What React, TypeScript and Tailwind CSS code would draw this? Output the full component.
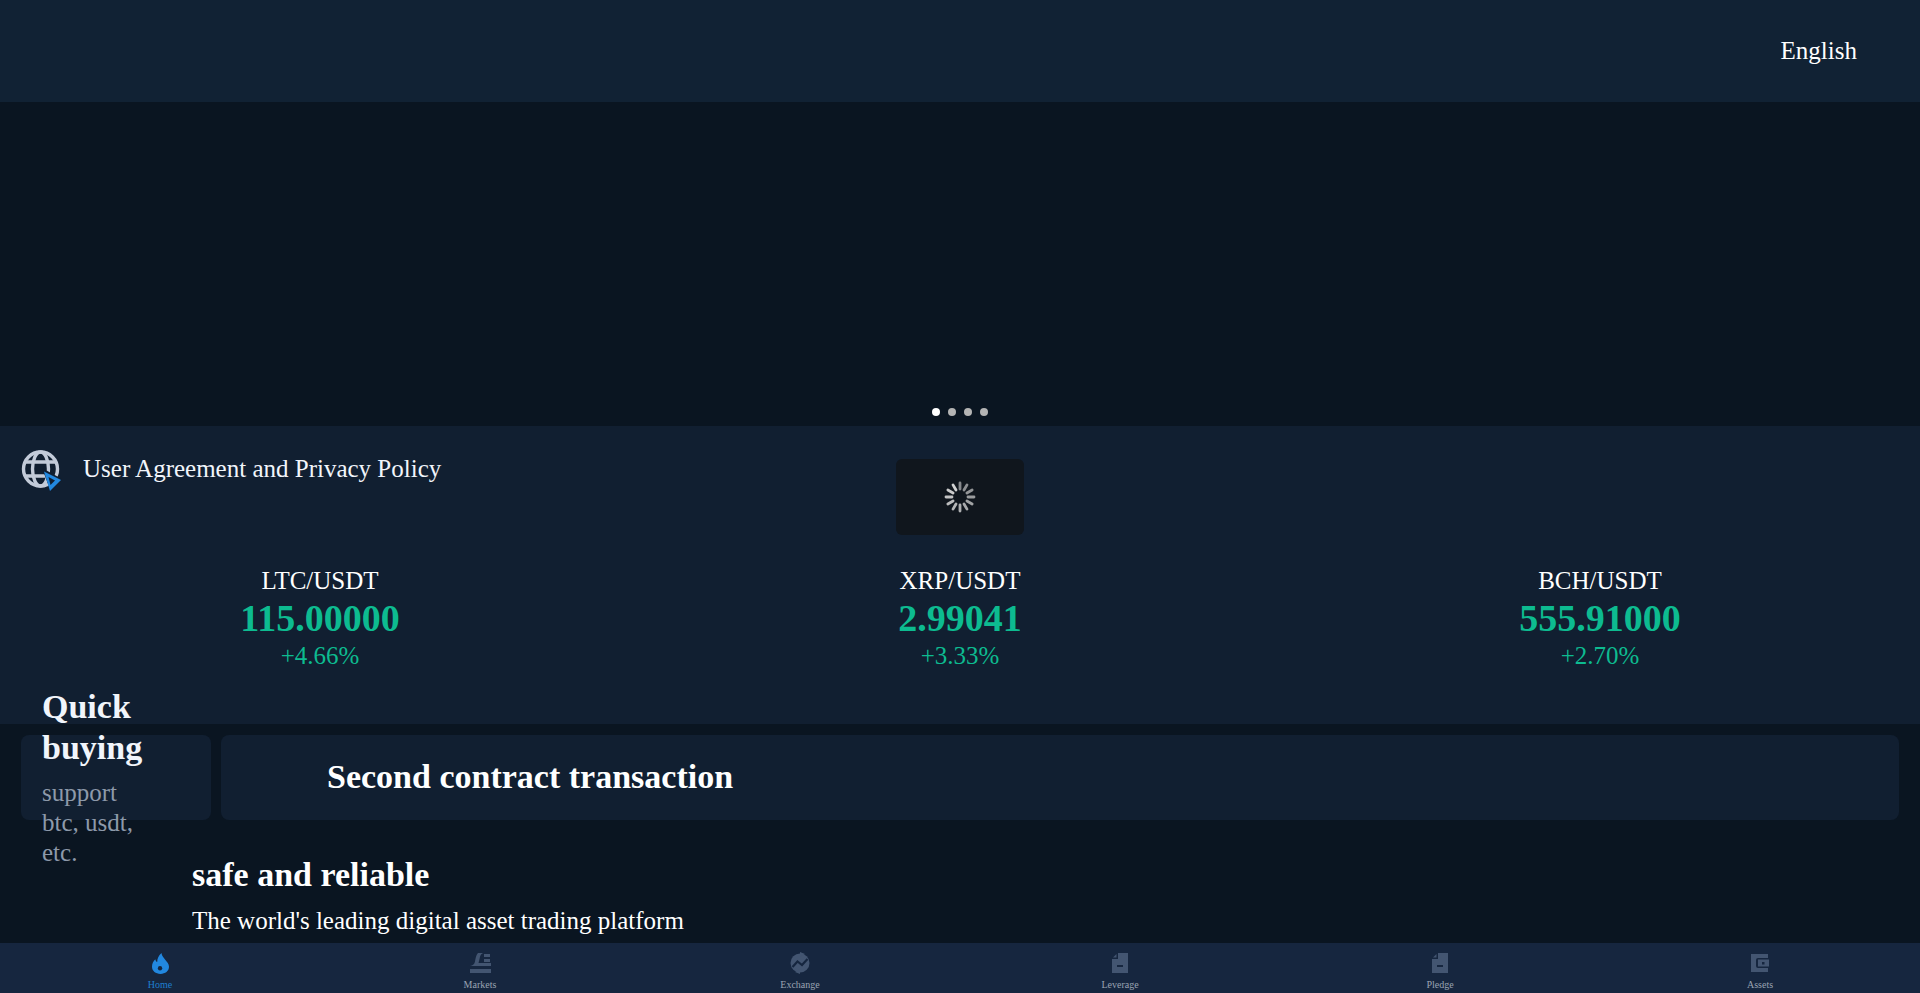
import type { ReactNode } from "react";

const tickers = [
  { pair: "LTC/USDT", price: "115.00000", change: "+4.66%" },
  { pair: "XRP/USDT", price: "2.99041", change: "+3.33%" },
  { pair: "BCH/USDT", price: "555.91000", change: "+2.70%" },
];

function Flame() {
  return (
    <svg viewBox="0 0 18 22" className="h-[21px] w-[17px]" fill="#2288e0">
      <path d="M10 0C10.500 3 12 4.500 14 7C16 9.500 18 11.500 18 14.500C18 19 14 22 9 22C4 22 0 19 0 14.500C0 11 1.500 8.500 3.500 6.500C3.800 8 4.500 9 5.500 9.500C5.500 6 7 2.500 10 0Z" />
      <circle cx="8.500" cy="16" r="2.300" fill="#16263f" />
    </svg>
  );
}

function Markets() {
  return (
    <svg viewBox="0 0 21 20" className="h-[20px] w-[21px]" fill="#435571">
      <path d="M8 0h5l-2 1.500C10 3 9.800 5 9.300 7L8.500 10H21v3H0c3-.5 4.500-1.800 5-4.500C5.500 5.500 6 2 8 0z" />
      <rect x="14" y="1" width="6" height="3" />
      <rect x="14" y="6" width="6" height="3" />
      <rect x="0" y="16" width="21" height="4" />
    </svg>
  );
}

function Exchange() {
  return (
    <svg viewBox="0 0 20 22" className="h-[22px] w-[20px]">
      <circle cx="10" cy="11" r="9.500" fill="#435571" />
      <path d="M10 0l5 2-5 3zM10 22l-5-2 5-3z" fill="#435571" />
      <path d="M2.500 15L7.500 9.500L12 13L17.500 7" fill="none" stroke="#16263f" strokeWidth="2.200" />
    </svg>
  );
}

function Doc() {
  return (
    <svg viewBox="0 0 16 20" className="h-[20px] w-[16px]" fill="#435571">
      <path d="M6 0H16V20H0V6H6Z" />
      <path d="M4.500 1V4.500H1Z" />
      <rect x="5" y="12" width="6" height="2" fill="#16263f" />
    </svg>
  );
}

function Wallet() {
  return (
    <svg viewBox="0 0 18 18" className="h-[18px] w-[18px]" fill="#435571">
      <path d="M0 0H17V4H7a2 2 0 0 0-2 2v6a2 2 0 0 0 2 2h10v4H0Z" />
      <path d="M7 5.500H18V12.500H7Z" />
      <rect x="11" y="8" width="2.500" height="2.500" fill="#16263f" />
    </svg>
  );
}

function Spinner() {
  return (
    <svg viewBox="0 0 32 32" className="h-[32px] w-[32px]" stroke="#d4d4d4" strokeWidth="2.800" strokeLinecap="round">
      {Array.from({ length: 12 }).map((_, i) => (
        <line key={i} x1="16" y1="2" x2="16" y2="8" transform={`rotate(${i * 30} 16 16)`} opacity={0.6 + i * 0.035} />
      ))}
    </svg>
  );
}

function GlobeIcon() {
  return (
    <svg viewBox="0 0 42 44" className="-ml-[1px] -mt-[2px] h-[44px] w-[42px] shrink-0" fill="none">
      <g stroke="#c3cbd9" strokeWidth="3.400">
        <circle cx="20.500" cy="21" r="17" />
        <ellipse cx="20.500" cy="21" rx="8" ry="17" />
        <path d="M5 14h31M5 28h22" />
      </g>
      <path d="M22 20L42 31L31 44Z" fill="#111f31" />
      <path d="M24 23.500L41 32L30 43Z" fill="#2288e0" />
      <path d="M28.500 29L35 32.500L30.500 37Z" fill="#111f31" />
    </svg>
  );
}

function NavItem({ label, active, children }: { label: string; active?: boolean; children: ReactNode }) {
  return (
    <div className="flex h-full flex-1 flex-col items-center justify-start pt-[9px]">
      <div className="flex h-[22px] items-center justify-center">{children}</div>
      <span className={`mt-[5px] text-[10px] leading-[12px] ${active ? "text-[#1f7fd0]" : "text-[#9aa3b2]"}`}>{label}</span>
    </div>
  );
}

export default function App() {
  return (
    <div className="relative h-screen overflow-hidden bg-[#0a1521] font-['Liberation_Serif',serif] text-white">
      <header className="flex h-[102px] items-center justify-end bg-[#112234] pr-[63px]">
        <span className="text-[25px]">English</span>
      </header>

      <div className="relative h-[324px] bg-[#0a1521]">
        <div className="absolute bottom-[10px] left-0 right-0 flex justify-center gap-2">
          <span className="h-2 w-2 rounded-full bg-white" />
          <span className="h-2 w-2 rounded-full bg-[#b4b4b4]" />
          <span className="h-2 w-2 rounded-full bg-[#b4b4b4]" />
          <span className="h-2 w-2 rounded-full bg-[#b4b4b4]" />
        </div>
      </div>

      <section className="h-[298px] bg-[#111f31]">
        <div className="flex h-[127px] items-start pl-[21px] pt-[24px]">
          <GlobeIcon />
          <span className="ml-[21px] mt-[1px] text-[25px] leading-[36px] text-[#f1f5fb]">User Agreement and Privacy Policy</span>
        </div>
        <div className="grid grid-cols-3 pt-[10px]">
          {tickers.map((t) => (
            <div key={t.pair} className="flex flex-col items-center">
              <span className="text-[25px] leading-[36px]">{t.pair}</span>
              <span className="text-[38px] font-bold leading-[38px] text-[#0dbb90]">{t.price}</span>
              <span className="mt-px text-[25px] leading-[36px] text-[#0dbb90]">{t.change}</span>
            </div>
          ))}
        </div>
      </section>

      <div className="flex gap-[10px] px-[21px] pt-[11px]">
        <div className="flex h-[85px] w-[190px] shrink-0 flex-col justify-center rounded-lg bg-[#111f31] pb-[2px] pl-[21px] pr-[63px]">
          <div className="text-[34px] font-bold leading-[41px] text-[#f1f5fb]">Quick buying</div>
          <div className="mt-[10px] text-[25px] leading-[30px] text-[#8d99aa]">support btc, usdt, etc.</div>
        </div>
        <div className="flex h-[85px] flex-1 items-center rounded-lg bg-[#111f31] pb-[2px] pl-[106px]">
          <span className="text-[34px] font-bold">Second contract transaction</span>
        </div>
      </div>

      <div className="pl-[192px] pt-[31px]">
        <div className="text-[34px] font-bold leading-[48px]">safe and reliable</div>
        <div className="mt-[2px] text-[25px] leading-[40px]">The world's leading digital asset trading platform</div>
      </div>

      <nav className="fixed bottom-0 left-0 right-0 flex h-[50px] bg-[#16263f]">
        <NavItem label="Home" active><Flame /></NavItem>
        <NavItem label="Markets"><Markets /></NavItem>
        <NavItem label="Exchange"><Exchange /></NavItem>
        <NavItem label="Leverage"><Doc /></NavItem>
        <NavItem label="Pledge"><Doc /></NavItem>
        <NavItem label="Assets"><Wallet /></NavItem>
      </nav>

      <div className="fixed inset-0 flex items-center justify-center">
        <div className="flex h-[76px] w-[128px] items-center justify-center rounded-[6px] bg-[#10161d]">
          <Spinner />
        </div>
      </div>
    </div>
  );
}
